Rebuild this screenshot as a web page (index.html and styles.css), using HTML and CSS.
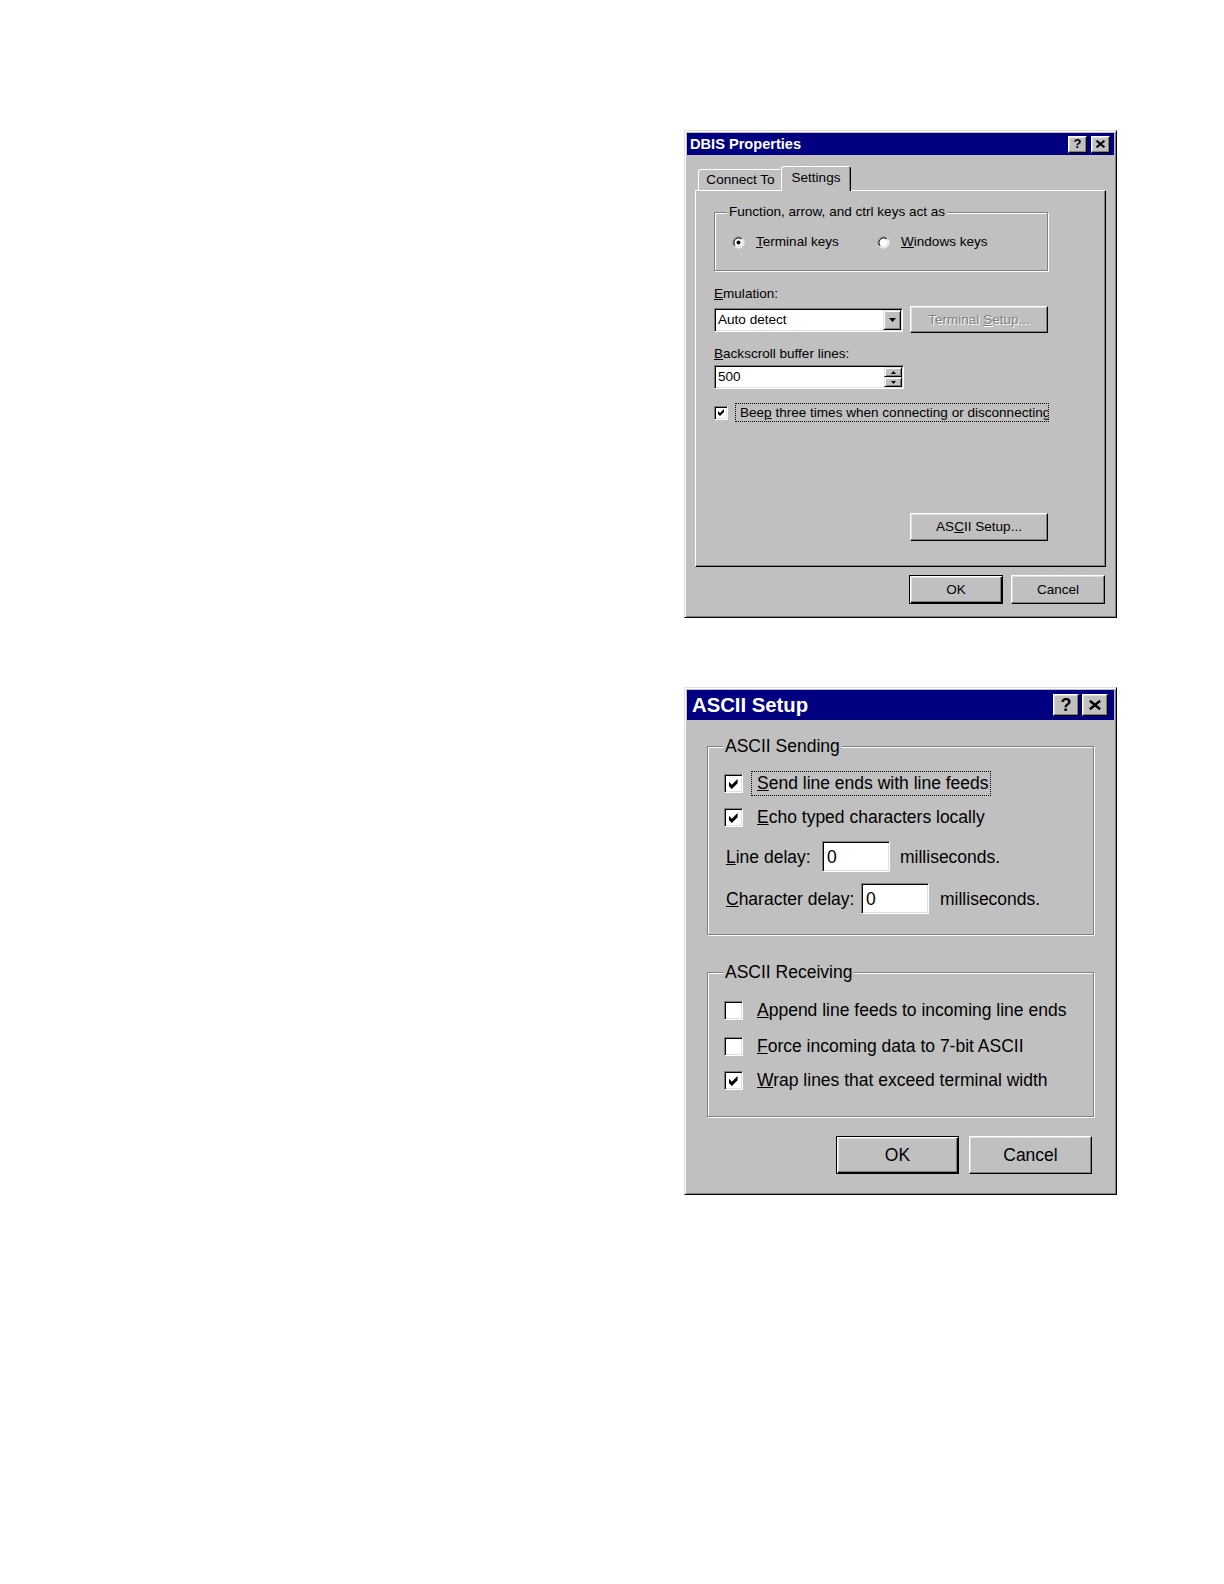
FILE: index.html
```html
<!DOCTYPE html>
<html>
<head>
<meta charset="utf-8">
<title>DBIS Properties / ASCII Setup</title>
<link rel="stylesheet" href="styles.css">
</head>
<body>
<div class="page">

  <div class="dialog dlg1">
    <div class="titlebar">
      <span class="title">DBIS Properties</span>
      <div class="tbtns">
        <span class="tbtn q">?</span>
        <span class="tbtn"><svg class="xicon" viewBox="0 0 8 7"><path d="M0.5 0.5 L7.5 6.5 M7.5 0.5 L0.5 6.5" stroke="#000" stroke-width="1.7" fill="none"/></svg></span>
      </div>
    </div>

    <div class="tabs">
      <div class="tab tab-connect">Connect To</div>
      <div class="tab tab-settings active">Settings</div>
    </div>

    <div class="panel">
      <div class="group g1">
        <span class="legend">Function, arrow, and ctrl keys act as</span>
        <div class="radios">
          <div class="radio-item first">
            <svg class="radio" viewBox="0 0 13 13">
              <circle cx="6.5" cy="6.5" r="5" fill="#fff"/>
              <path d="M2.61 10.39 A5.5 5.5 0 0 1 10.39 2.61" stroke="#808080" fill="none"/>
              <path d="M10.39 2.61 A5.5 5.5 0 0 1 2.61 10.39" stroke="#fff" fill="none"/>
              <path d="M3.32 9.68 A4.5 4.5 0 0 1 9.68 3.32" stroke="#000" fill="none"/>
              <path d="M9.68 3.32 A4.5 4.5 0 0 1 3.32 9.68" stroke="#dfdfdf" fill="none"/>
              <circle cx="6.5" cy="6.5" r="2" fill="#000"/>
            </svg>
            <span><u>T</u>erminal keys</span>
          </div>
          <div class="radio-item">
            <svg class="radio" viewBox="0 0 13 13">
              <circle cx="6.5" cy="6.5" r="5" fill="#fff"/>
              <path d="M2.61 10.39 A5.5 5.5 0 0 1 10.39 2.61" stroke="#808080" fill="none"/>
              <path d="M10.39 2.61 A5.5 5.5 0 0 1 2.61 10.39" stroke="#fff" fill="none"/>
              <path d="M3.32 9.68 A4.5 4.5 0 0 1 9.68 3.32" stroke="#000" fill="none"/>
              <path d="M9.68 3.32 A4.5 4.5 0 0 1 3.32 9.68" stroke="#dfdfdf" fill="none"/>
            </svg>
            <span><u>W</u>indows keys</span>
          </div>
        </div>
      </div>

      <div class="lbl emul"><u>E</u>mulation:</div>
      <div class="combo-row">
        <div class="combo">
          <span class="field-text">Auto detect</span>
          <span class="arrow-btn"><svg class="tri" viewBox="0 0 7 4"><path d="M0 0 H7 L3.5 4 Z" fill="#000"/></svg></span>
        </div>
        <div class="btn btn-term disabled"><span>Terminal <u>S</u>etup...</span></div>
      </div>

      <div class="lbl back"><u>B</u>ackscroll buffer lines:</div>
      <div class="spin">
        <span class="field-text">500</span>
        <span class="spin-btns">
          <span class="spin-btn"><svg class="tri-s" viewBox="0 0 5 3"><path d="M2.5 0 L5 3 H0 Z" fill="#000"/></svg></span>
          <span class="spin-btn"><svg class="tri-s" viewBox="0 0 5 3"><path d="M0 0 H5 L2.5 3 Z" fill="#000"/></svg></span>
        </span>
      </div>

      <div class="check-row beep">
        <span class="check"><svg class="tick" viewBox="0 0 7 7"><path d="M0 2 L2 4 L6 0 L6 3 L2 7 L0 5 Z" fill="#000"/></svg></span>
        <span class="flabel focus">Bee<u>p</u> three times when connecting or disconnecting</span>
      </div>

      <div class="btn btn-ascii"><span>AS<u>C</u>II Setup...</span></div>
    </div>

    <div class="footer">
      <div class="btn default">OK</div>
      <div class="btn">Cancel</div>
    </div>
  </div>

  <div class="dialog dlg2">
    <div class="titlebar">
      <span class="title">ASCII Setup</span>
      <div class="tbtns">
        <span class="tbtn q">?</span>
        <span class="tbtn"><svg class="xicon" viewBox="0 0 11 9"><path d="M0.8 0.6 L10.2 8.4 M10.2 0.6 L0.8 8.4" stroke="#000" stroke-width="2.2" fill="none"/></svg></span>
      </div>
    </div>

    <div class="group send">
      <span class="legend">ASCII Sending</span>
      <div class="check-row">
        <span class="check"><svg class="tick" viewBox="0 0 7 7"><path d="M0 2 L2 4 L6 0 L6 3 L2 7 L0 5 Z" fill="#000"/></svg></span>
        <span class="flabel focus"><u>S</u>end line ends with line feeds</span>
      </div>
      <div class="check-row gap9">
        <span class="check"><svg class="tick" viewBox="0 0 7 7"><path d="M0 2 L2 4 L6 0 L6 3 L2 7 L0 5 Z" fill="#000"/></svg></span>
        <span class="flabel"><u>E</u>cho typed characters locally</span>
      </div>
      <div class="edit-row">
        <span class="elabel lbl-line"><u>L</u>ine delay:</span>
        <span class="edit"><span class="field-text">0</span></span>
        <span class="unit">milliseconds.</span>
      </div>
      <div class="edit-row">
        <span class="elabel lbl-char"><u>C</u>haracter delay:</span>
        <span class="edit"><span class="field-text">0</span></span>
        <span class="unit unit2">milliseconds.</span>
      </div>
    </div>

    <div class="group recv">
      <span class="legend">ASCII Receiving</span>
      <div class="check-row">
        <span class="check"></span>
        <span class="flabel"><u>A</u>ppend line feeds to incoming line ends</span>
      </div>
      <div class="check-row gap11">
        <span class="check"></span>
        <span class="flabel"><u>F</u>orce incoming data to 7-bit ASCII</span>
      </div>
      <div class="check-row gap9">
        <span class="check"><svg class="tick" viewBox="0 0 7 7"><path d="M0 2 L2 4 L6 0 L6 3 L2 7 L0 5 Z" fill="#000"/></svg></span>
        <span class="flabel"><u>W</u>rap lines that exceed terminal width</span>
      </div>
    </div>

    <div class="footer">
      <div class="btn default">OK</div>
      <div class="btn">Cancel</div>
    </div>
  </div>

</div>
</body>
</html>
```

FILE: styles.css
```css
* { box-sizing: border-box; }
html, body { margin: 0; padding: 0; background: #fff; }
body { font-family: "Liberation Sans", Arial, sans-serif; color: #000; }
u { text-decoration-thickness: 1px; text-underline-offset: 1px; }

.page {
  display: flex;
  flex-direction: column;
  align-items: flex-start;
  gap: 69px;
  padding: 130px 0 0 684px;
}

/* ---------- window frame ---------- */
.dialog {
  width: 433px;
  background: #c0c0c0;
  border: 1px solid;
  border-color: #dfdfdf #000 #000 #dfdfdf;
  box-shadow: inset 1px 1px #fff, inset -1px -1px #808080;
  padding: 2px;
  display: flex;
  flex-direction: column;
}
.dlg1 { height: 488px; font-size: 13.55px; line-height: 16px; }
.dlg2 { height: 508px; font-size: 17.5px; line-height: 20px; }

.titlebar {
  background: #000080;
  color: #fff;
  font-weight: bold;
  display: flex;
  align-items: center;
  justify-content: space-between;
  flex: none;
}
.dlg1 .titlebar { height: 22px; padding: 0 4px 0 3px; font-size: 14.6px; }
.dlg2 .titlebar { height: 30px; padding: 0 6px 0 5px; font-size: 20.3px; }

.tbtns { display: flex; }
.dlg1 .tbtns { gap: 4px; }
.dlg2 .tbtns { gap: 3px; }
.tbtn {
  background: #c0c0c0;
  color: #000;
  display: flex;
  align-items: center;
  justify-content: center;
  border: 1px solid;
  border-color: #fff #000 #000 #fff;
  box-shadow: inset -1px -1px #808080, inset 1px 1px #dfdfdf;
  font-weight: bold;
}
.dlg1 .tbtn { width: 19px; height: 17px; font-size: 13px; }
.dlg2 .tbtn { width: 26px; height: 22px; font-size: 18px; }
.dlg1 .xicon { width: 9px; height: 8px; }
.dlg2 .xicon { width: 12px; height: 10px; }

/* ---------- tabs ---------- */
.tabs {
  display: flex;
  align-items: flex-end;
  height: 25px;
  margin: 10px 0 0 11px;
  position: relative;
  z-index: 1;
  flex: none;
}
.tab {
  height: 21px;
  text-align: center;
  line-height: 19px;
  background: #c0c0c0;
  border: 1px solid;
  border-bottom: none;
  border-color: #fff #000 transparent #fff;
  box-shadow: inset -1px 0 #808080;
  border-radius: 3px 3px 0 0;
}
.tab-connect { width: 85px; }
.tab-settings { width: 70px; }
.tab.active {
  height: 25px;
  line-height: 21px;
  margin: 0 0 -1px -2px;
}

.panel {
  margin-left: 8px;
  width: 411px;
  height: 377px;
  border: 1px solid;
  border-color: #fff #000 #000 #fff;
  box-shadow: inset -1px -1px #808080;
  padding: 21px 0 25px 18px;
  display: flex;
  flex-direction: column;
  align-items: flex-start;
  flex: none;
}

/* ---------- group boxes ---------- */
.group {
  position: relative;
  border: 1px solid #808080;
  box-shadow: 1px 1px 0 #fff, inset 1px 1px 0 #fff;
  flex: none;
}
.legend {
  position: absolute;
  background: #c0c0c0;
  padding: 0 2px;
  white-space: nowrap;
}
.dlg1 .legend { top: -9px; left: 12px; }
.dlg2 .legend { top: -11px; left: 15px; }

.g1 { width: 334px; height: 59px; padding: 21px 0 0 17px; }
.radios { display: flex; align-items: center; height: 16px; }
.radio-item { display: flex; align-items: center; gap: 11px; white-space: nowrap; }
.radio-item.first { width: 145px; }
.radio { width: 13px; height: 13px; flex: none; }

/* ---------- fields ---------- */
.lbl { white-space: nowrap; }
.emul { margin-top: 15px; }
.back { margin-top: 13px; }

.combo, .spin, .edit {
  background: #fff;
  border: 1px solid;
  border-color: #808080 #fff #fff #808080;
  box-shadow: inset 1px 1px #000, inset -1px -1px #dfdfdf;
  display: flex;
  align-items: center;
}
.combo-row { display: flex; align-items: center; height: 27px; margin-top: 4px; }
.combo { width: 189px; height: 24px; padding: 1px 1px 1px 2px; }
.field-text { flex: 1; white-space: nowrap; padding-left: 1px; }
.arrow-btn {
  width: 18px;
  height: 20px;
  background: #c0c0c0;
  border: 1px solid;
  border-color: #dfdfdf #000 #000 #dfdfdf;
  box-shadow: inset 1px 1px #fff, inset -1px -1px #808080;
  display: flex;
  align-items: center;
  justify-content: center;
  flex: none;
}
.tri { width: 7px; height: 4px; }

.spin { width: 190px; height: 24px; margin-top: 3px; padding: 1px 1px 1px 2px; }
.spin-btns { display: flex; flex-direction: column; width: 18px; height: 20px; flex: none; }
.spin-btn {
  flex: 1;
  background: #c0c0c0;
  border: 1px solid;
  border-color: #dfdfdf #000 #000 #dfdfdf;
  box-shadow: inset 1px 1px #fff, inset -1px -1px #808080;
  display: flex;
  align-items: center;
  justify-content: center;
}
.tri-s { width: 5px; height: 3px; }

/* ---------- checkboxes ---------- */
.check-row { display: flex; align-items: center; white-space: nowrap; }
.check {
  background: #fff;
  border: 1px solid;
  border-color: #808080 #fff #fff #808080;
  box-shadow: inset 1px 1px #000, inset -1px -1px #dfdfdf;
  display: flex;
  align-items: center;
  justify-content: center;
  flex: none;
}
.flabel { border: 1px dotted transparent; }
.flabel.focus { border-color: #000; }

.dlg1 .check { width: 14px; height: 14px; }
.dlg1 .tick { width: 7px; height: 7px; }
.beep { margin-top: 14px; height: 19px; }
.beep .flabel {
  margin-left: 7px;
  width: 314px;
  height: 19px;
  padding-left: 4px;
  line-height: 17px;
  overflow: hidden;
}

.dlg2 .check { width: 19px; height: 19px; }
.dlg2 .tick { width: 10px; height: 10px; }
.dlg2 .check-row { height: 25px; }
.dlg2 .flabel { margin-left: 8px; height: 25px; line-height: 23px; padding: 0 1px 0 5px; }
.gap9 { margin-top: 9px; }
.gap11 { margin-top: 11px; }

.send {
  margin: 26px 0 0 20px;
  width: 387px;
  height: 189px;
  padding: 24px 0 0 16px;
}
.recv {
  margin: 37px 0 0 20px;
  width: 387px;
  height: 145px;
  padding: 25px 0 0 16px;
}

.edit-row { display: flex; align-items: center; height: 31px; margin-top: 11px; white-space: nowrap; }
.elabel { margin-left: 2px; }
.lbl-line { width: 96px; }
.lbl-char { width: 135px; }
.edit { width: 68px; height: 31px; padding: 0 3px 0 3px; }
.unit { margin-left: 10px; }
.unit2 { margin-left: 11px; }

/* ---------- buttons ---------- */
.btn {
  background: #c0c0c0;
  border: 1px solid;
  border-color: #fff #000 #000 #fff;
  box-shadow: inset -1px -1px #808080, inset 1px 1px #dfdfdf;
  display: flex;
  align-items: center;
  justify-content: center;
  white-space: nowrap;
  flex: none;
}
.btn.default {
  border-color: #000;
  box-shadow: inset 1px 1px #fff, inset -1px -1px #000, inset -2px -2px #808080, inset 2px 2px #dfdfdf;
}
.btn.disabled {
  color: #808080;
  text-shadow: 1px 1px 0 #fff;
}
.btn-term { width: 138px; height: 27px; margin-left: 7px; }
.btn-ascii { width: 138px; height: 28px; margin: auto 0 0 196px; }

.footer { display: flex; flex: none; }
.dlg1 .footer { margin-top: 8px; padding-left: 222px; gap: 8px; }
.dlg1 .footer .btn { width: 94px; height: 29px; }
.dlg2 .footer { margin-top: 19px; padding-left: 149px; gap: 10px; }
.dlg2 .footer .btn { width: 123px; height: 38px; }
```
